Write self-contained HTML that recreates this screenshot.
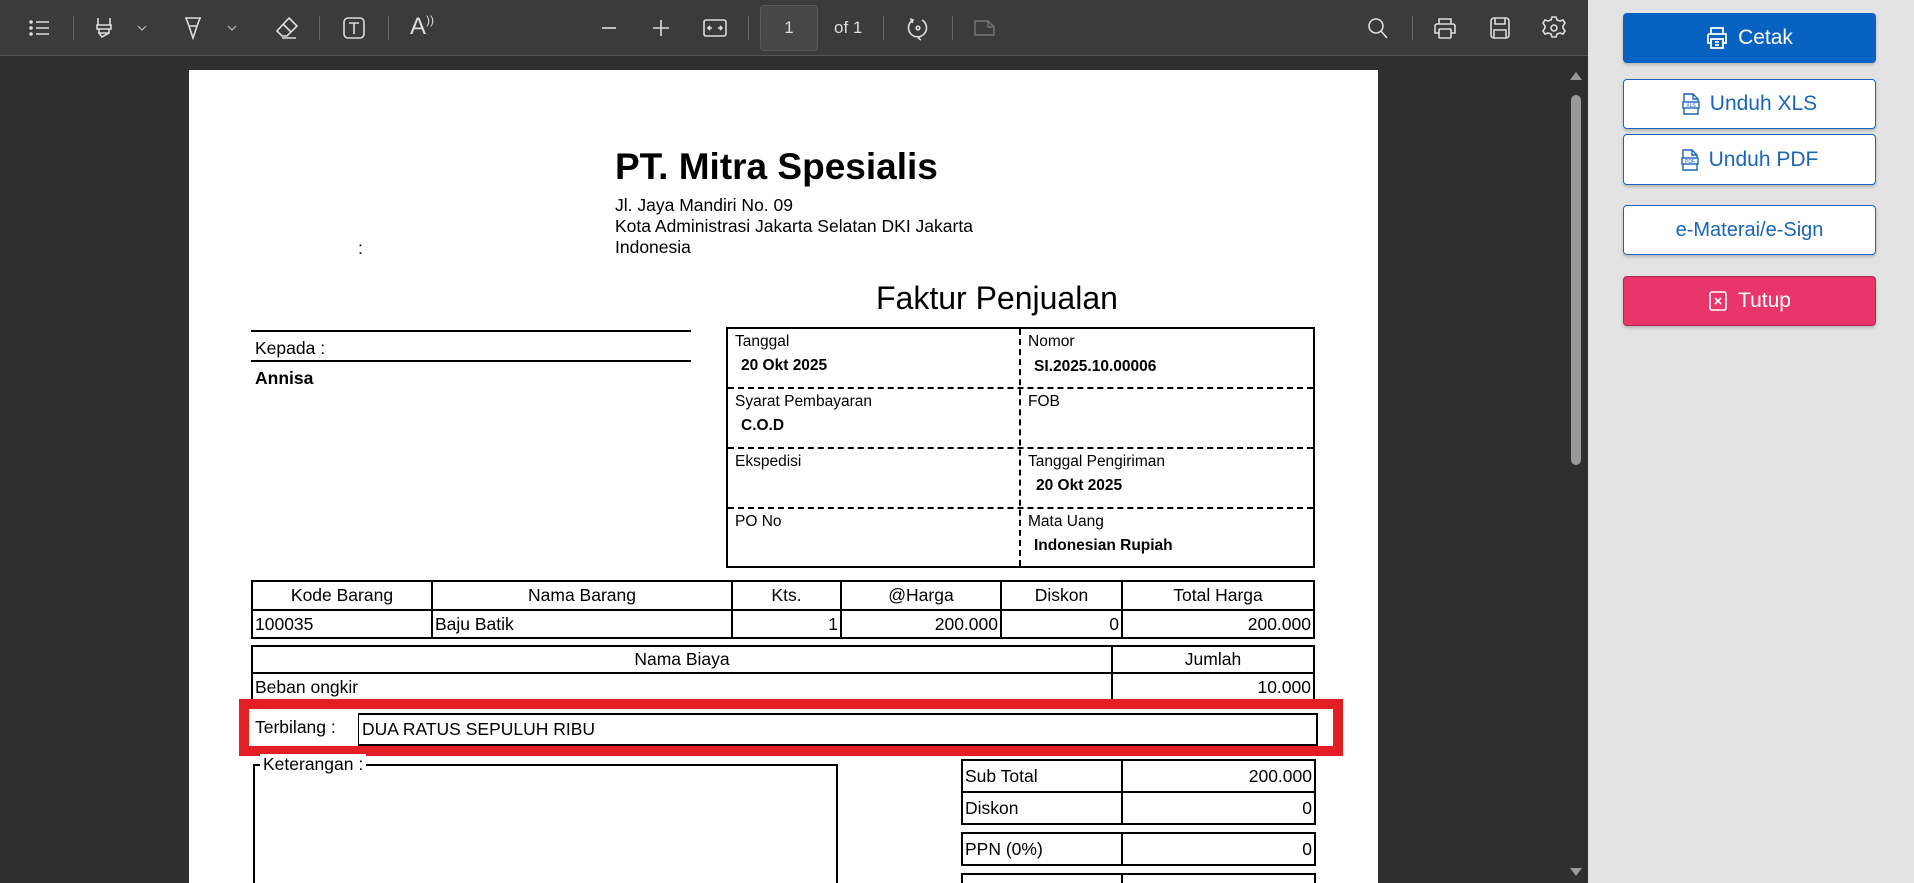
<!DOCTYPE html>
<html style="overflow:hidden;width:1914px;height:883px"><head><meta charset="utf-8"><style>
*{margin:0;padding:0;box-sizing:border-box}
body{width:1914px;height:883px;overflow:hidden;background:#e3e3e3;font-family:"Liberation Sans",Arial,sans-serif;position:relative}
.a{position:absolute}
#viewer{left:0;top:0;width:1588px;height:883px;background:#2f2f2f}
#tb{left:0;top:0;width:1588px;height:56px;background:#3b3b3b;border-bottom:1px solid #555}
.ic{position:absolute;top:15px}
.sep{position:absolute;top:16px;width:1px;height:24px;background:#666}
#page{left:189px;top:70px;width:1189px;height:813px;background:#fff;color:#000;overflow:hidden}
.t{position:absolute;white-space:nowrap}
.btn{position:absolute;left:1623px;width:253px;border-radius:4px;font-size:21px;display:flex;align-items:center;justify-content:center;gap:10px;box-shadow:0 2px 3px rgba(0,0,0,.2)}
.w{background:#fff;border:1px solid #1b64b8;color:#1b64b8}
.lbl{font-size:15.5px}
.val{font-size:15.5px;font-weight:bold}
.tc{font-size:17.5px}
</style></head><body>
<div id="viewer" class="a"></div>
<div id="tb" class="a">
 <svg class="ic" style="left:27px" width="26" height="26" viewBox="0 0 26 26" fill="none" stroke="#ddd" stroke-width="1.6"><path d="M9 7h13M9 13h13M9 19h13"/><circle cx="4" cy="7" r="1" fill="#ddd"/><circle cx="4" cy="13" r="1" fill="#ddd"/><circle cx="4" cy="19" r="1" fill="#ddd"/></svg>
 <div class="sep" style="left:73px"></div>
 <svg class="ic" style="left:92px" width="26" height="26" viewBox="0 0 26 26" fill="none" stroke="#ddd" stroke-width="1.6"><path d="M6 3v7h12V3M5 10h14v4H5zM7 14v4l3 4h0l7-4v-4M6 18h11"/></svg>
 <svg class="ic" style="left:136px;top:22px" width="12" height="12" viewBox="0 0 12 12" fill="none" stroke="#bbb" stroke-width="1.2"><path d="M2 4l4 4 4-4"/></svg>
 <svg class="ic" style="left:180px" width="26" height="26" viewBox="0 0 26 26" fill="none" stroke="#ddd" stroke-width="1.6"><path d="M5 3h16M6 3l3 8h8l3-8M9 11l4 12 4-12"/></svg>
 <svg class="ic" style="left:226px;top:22px" width="12" height="12" viewBox="0 0 12 12" fill="none" stroke="#bbb" stroke-width="1.2"><path d="M2 4l4 4 4-4"/></svg>
 <svg class="ic" style="left:274px" width="26" height="26" viewBox="0 0 26 26" fill="none" stroke="#ddd" stroke-width="1.6"><path d="M15 3l8 8-10 10H8l-5-5zM9 9l8 8M8 23h14"/></svg>
 <div class="sep" style="left:319px"></div>
 <svg class="ic" style="left:341px" width="26" height="26" viewBox="0 0 26 26" fill="none" stroke="#ddd" stroke-width="1.6"><rect x="3" y="3" width="20" height="20" rx="4"/><path d="M8 8h10M13 8v11"/></svg>
 <div class="sep" style="left:388px"></div>
 <div class="t" style="left:410px;top:13px;color:#ddd;font-size:24px;font-weight:300">A<span style="font-size:12px;vertical-align:top">))</span></div>
 <svg class="ic" style="left:596px" width="26" height="26" viewBox="0 0 26 26" stroke="#ddd" stroke-width="1.6"><path d="M6 13h14"/></svg>
 <svg class="ic" style="left:648px" width="26" height="26" viewBox="0 0 26 26" stroke="#ddd" stroke-width="1.6"><path d="M5 13h16M13 5v16"/></svg>
 <svg class="ic" style="left:702px" width="26" height="26" viewBox="0 0 26 26" fill="none" stroke="#ddd" stroke-width="1.6"><rect x="2" y="5" width="22" height="16" rx="2"/><path d="M6 13h4M16 13h4M8 11l-2 2 2 2M18 11l2 2-2 2"/></svg>
 <div class="sep" style="left:748px"></div>
 <div class="a" style="left:760px;top:5px;width:58px;height:46px;background:#474747;border:1px solid #5a5a5a;border-radius:4px;color:#ddd;font-size:17px;text-align:center;line-height:44px">1</div>
 <div class="t" style="left:834px;top:18px;color:#ddd;font-size:17px">of 1</div>
 <div class="sep" style="left:883px"></div>
 <svg class="ic" style="left:905px" width="26" height="26" viewBox="0 0 26 26" fill="none" stroke="#ddd" stroke-width="1.6"><path d="M8 5A9 9 0 1 0 17 5M5 4l3 1-1 3M13 23l3 2M13 23l3-2"/><circle cx="13" cy="13" r="1.8"/></svg>
 <div class="sep" style="left:952px"></div>
 <svg class="ic" style="left:972px" width="26" height="26" viewBox="0 0 26 26" fill="none" stroke="#777" stroke-width="1.4"><path d="M3 6h13l6 6v8H3zM16 6v6h6"/></svg>
 <svg class="ic" style="left:1365px" width="26" height="26" viewBox="0 0 26 26" fill="none" stroke="#ddd" stroke-width="1.6"><circle cx="11" cy="11" r="7"/><path d="M16 16l6 7"/></svg>
 <div class="sep" style="left:1412px"></div>
 <svg class="ic" style="left:1432px" width="26" height="26" viewBox="0 0 26 26" fill="none" stroke="#ddd" stroke-width="1.6"><path d="M7 9V4h12v5M5 9h16a2 2 0 0 1 2 2v7h-4M7 18H3v-7a2 2 0 0 1 2-2"/><rect x="7" y="14" width="12" height="9" rx="1"/></svg>
 <svg class="ic" style="left:1487px" width="26" height="26" viewBox="0 0 26 26" fill="none" stroke="#ddd" stroke-width="1.6"><rect x="4" y="3" width="18" height="20" rx="3"/><path d="M8 3v6h10V3M7 23v-8h12v8"/></svg>
 <svg class="ic" style="left:1541px" width="26" height="26" viewBox="0 0 26 26" fill="none" stroke="#ddd" stroke-width="1.6"><path d="M11 2h4l1 3 3 1 3-1 2 3-2 3v2l2 3-2 3-3-1-3 1-1 3h-4l-1-3-3-1-3 1-2-3 2-3v-2l-2-3 2-3 3 1 3-1z"/><circle cx="13" cy="13" r="3"/></svg>
</div>
<div class="a" style="left:1570px;top:72px;width:0;height:0;border-left:6px solid transparent;border-right:6px solid transparent;border-bottom:8px solid #999"></div>
<div class="a" style="left:1571px;top:95px;width:10px;height:370px;background:#999;border-radius:5px"></div>
<div class="a" style="left:1570px;top:868px;width:0;height:0;border-left:6px solid transparent;border-right:6px solid transparent;border-top:8px solid #999"></div>

<div id="page" class="a">
 <div class="t" style="left:426px;top:78px;font-size:37px;font-weight:bold;line-height:1">PT. Mitra Spesialis</div>
 <div class="t" style="left:426px;top:125px;font-size:17.5px;line-height:21px">Jl. Jaya Mandiri No. 09<br>Kota Administrasi Jakarta Selatan DKI Jakarta<br>Indonesia</div>
 <div class="t" style="left:169px;top:168px;font-size:17.5px;line-height:21px">:</div>
 <div class="t" style="left:687px;top:210px;font-size:32px">Faktur Penjualan</div>
 <div class="a" style="left:62px;top:260px;width:440px;border-top:2px solid #000"></div>
 <div class="t" style="left:66px;top:268px;font-size:17.5px">Kepada :</div>
 <div class="a" style="left:62px;top:290px;width:440px;border-top:2px solid #000"></div>
 <div class="t" style="left:66px;top:298px;font-size:17.5px;font-weight:bold">Annisa</div>
 <div class="a" style="left:537px;top:257px;width:589px;height:241px;border:2px solid #000"></div>
 <div class="a" style="left:830px;top:259px;height:237px;border-left:2px dashed #000"></div>
 <div class="a" style="left:539px;top:317px;width:585px;border-top:2px dashed #000"></div>
 <div class="a" style="left:539px;top:377px;width:585px;border-top:2px dashed #000"></div>
 <div class="a" style="left:539px;top:437px;width:585px;border-top:2px dashed #000"></div>
 <div class="t lbl" style="left:546px;top:263px">Tanggal</div><div class="t val" style="left:552px;top:287px">20 Okt 2025</div>
 <div class="t lbl" style="left:839px;top:263px">Nomor</div><div class="t val" style="left:845px;top:288px">SI.2025.10.00006</div>
 <div class="t lbl" style="left:546px;top:323px">Syarat Pembayaran</div><div class="t val" style="left:552px;top:347px">C.O.D</div>
 <div class="t lbl" style="left:839px;top:323px">FOB</div>
 <div class="t lbl" style="left:546px;top:383px">Ekspedisi</div>
 <div class="t lbl" style="left:839px;top:383px">Tanggal Pengiriman</div><div class="t val" style="left:847px;top:407px">20 Okt 2025</div>
 <div class="t lbl" style="left:546px;top:443px">PO No</div>
 <div class="t lbl" style="left:839px;top:443px">Mata Uang</div><div class="t val" style="left:845px;top:467px">Indonesian Rupiah</div>
 <table class="a tc" style="left:62px;top:510px;width:1064px;border-collapse:collapse;">
  <tr style="height:29px"><td style="border:2px solid #000;text-align:center;width:180px">Kode Barang</td><td style="border:2px solid #000;text-align:center;width:300px">Nama Barang</td><td style="border:2px solid #000;text-align:center;width:109px">Kts.</td><td style="border:2px solid #000;text-align:center;width:160px">@Harga</td><td style="border:2px solid #000;text-align:center;width:121px">Diskon</td><td style="border:2px solid #000;text-align:center">Total Harga</td></tr>
  <tr style="height:28px"><td style="border:2px solid #000;padding-left:2px">100035</td><td style="border:2px solid #000;padding-left:2px">Baju Batik</td><td style="border:2px solid #000;text-align:right;padding-right:2px">1</td><td style="border:2px solid #000;text-align:right;padding-right:2px">200.000</td><td style="border:2px solid #000;text-align:right;padding-right:2px">0</td><td style="border:2px solid #000;text-align:right;padding-right:2px">200.000</td></tr>
 </table>
 <table class="a tc" style="left:62px;top:575px;width:1064px;border-collapse:collapse;">
  <tr style="height:27px"><td style="border:2px solid #000;text-align:center;width:860px">Nama Biaya</td><td style="border:2px solid #000;text-align:center">Jumlah</td></tr>
  <tr style="height:28px"><td style="border-left:2px solid #000;padding-left:2px">Beban ongkir</td><td style="border-left:2px solid #000;border-right:2px solid #000;text-align:right;padding-right:2px">10.000</td></tr>
 </table>
 <div class="a" style="left:169px;top:643px;width:960px;height:33px;border:2px solid #000;border-left:1px solid #000"></div>
 <div class="t tc" style="left:66px;top:647px">Terbilang :</div>
 <div class="t tc" style="left:173px;top:649px">DUA RATUS SEPULUH RIBU</div>
 <div class="a" style="left:50px;top:629px;width:1104px;height:57px;border:10px solid #e31e24"></div>
 <div class="a" style="left:64px;top:694px;width:585px;height:119px;border:2px solid #000;border-bottom:none"></div>
 <div class="t tc" style="left:71px;top:684px;background:#fff;padding:0 3px">Keterangan :</div>
 <table class="a tc" style="left:772px;top:689px;width:355px;border-collapse:collapse">
  <tr style="height:32px"><td style="border:2px solid #000;width:160px;padding-left:2px">Sub Total</td><td style="border:2px solid #000;text-align:right;padding-right:2px">200.000</td></tr>
  <tr style="height:32px"><td style="border:2px solid #000;padding-left:2px">Diskon</td><td style="border:2px solid #000;text-align:right;padding-right:2px">0</td></tr>
 </table>
 <table class="a tc" style="left:772px;top:762px;width:355px;border-collapse:collapse">
  <tr style="height:32px"><td style="border:2px solid #000;width:160px;padding-left:2px">PPN (0%)</td><td style="border:2px solid #000;text-align:right;padding-right:2px">0</td></tr>
 </table>
 <div class="a" style="left:772px;top:803px;width:355px;height:10px;border:2px solid #000;border-bottom:none"></div>
 <div class="a" style="left:932px;top:803px;height:10px;border-left:2px solid #000"></div>
</div>

<div class="btn" style="top:13px;height:50px;background:#0762c2;color:#fff">
 <svg width="22" height="24" viewBox="0 0 22 24" fill="none" stroke="#fff" stroke-width="1.8"><path d="M5 8V2h12v6M2 8h18v9h-3M5 17H2V8"/><rect x="5" y="13" width="12" height="9"/><path d="M9 16h4M9 19h4"/></svg>Cetak</div>
<div class="btn w" style="top:79px;height:50px"><svg width="18" height="22" viewBox="0 0 18 22" fill="none" stroke="#1b64b8" stroke-width="1.4"><path d="M2 1h9l5 5v15H2zM11 1v5h5"/><rect x="1" y="9" width="16" height="6" fill="#fff"/><text x="9" y="14" font-size="5" text-anchor="middle" fill="#1b64b8" stroke="none" font-family="Liberation Sans">XLS</text></svg>Unduh XLS</div>
<div class="btn w" style="top:134px;height:51px"><svg width="18" height="22" viewBox="0 0 18 22" fill="none" stroke="#1b64b8" stroke-width="1.4"><path d="M2 1h9l5 5v15H2zM11 1v5h5"/><rect x="1" y="9" width="16" height="6" fill="#fff"/><text x="9" y="14" font-size="5" text-anchor="middle" fill="#1b64b8" stroke="none" font-family="Liberation Sans">PDF</text></svg>Unduh PDF</div>
<div class="btn w" style="top:205px;height:50px;font-size:20px">e-Materai/e-Sign</div>
<div class="btn" style="top:276px;height:50px;background:#e8366a;color:#fff;border:1px solid #b02855"><svg width="20" height="22" viewBox="0 0 20 22" fill="none" stroke="#fff" stroke-width="1.6"><rect x="2" y="2" width="16" height="18" rx="2"/><path d="M7 8l6 6M13 8l-6 6"/></svg>Tutup</div>
</body></html>
